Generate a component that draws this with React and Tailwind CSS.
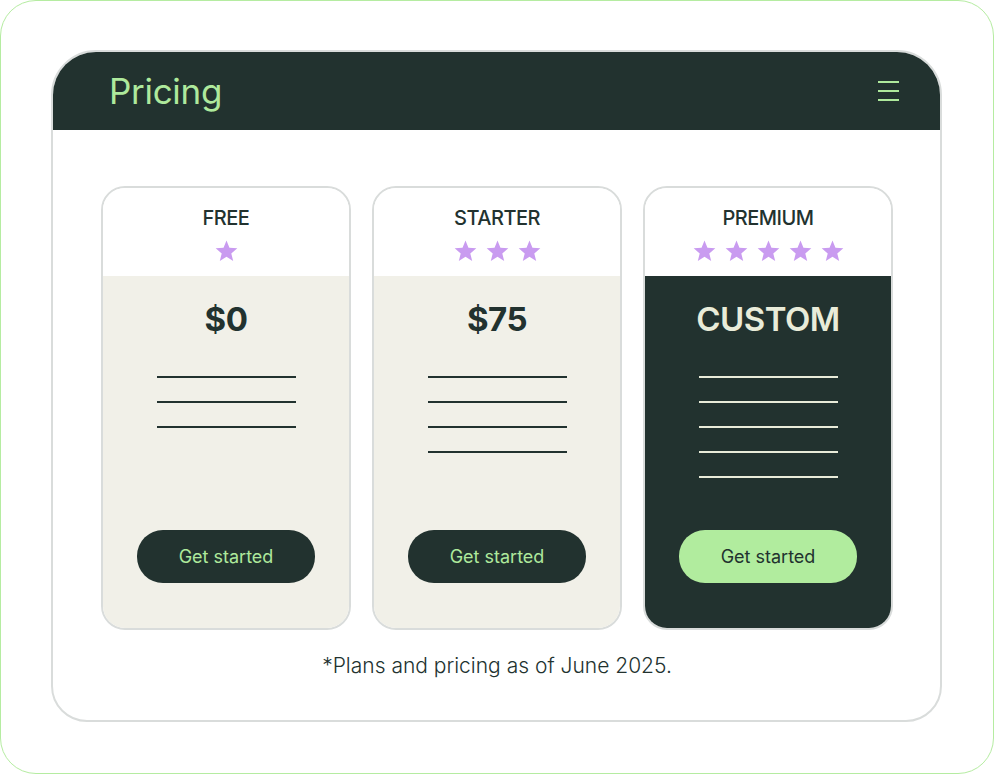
import { Fragment } from 'react'

const plans = [
  { name: 'FREE', stars: 1, price: '$0', lines: 3, dark: false },
  { name: 'STARTER', stars: 3, price: '$75', lines: 4, dark: false },
  { name: 'PREMIUM', stars: 5, price: 'CUSTOM', lines: 5, dark: true },
]

function Star() {
  return (
    <svg width="23" height="22" viewBox="0 0 24 23">
      <path d="M12 0.5l3.1 7.6 8.2 0.6-6.3 5.3 2 8-7-4.4-7 4.4 2-8L0.7 8.7l8.2-0.6z" fill="#c99bf0" />
    </svg>
  )
}

function PlanCard({ plan }) {
  return (
    <div className="w-[250px] h-[444px] rounded-[24px] border-2 border-[#d9dcdb] overflow-hidden flex flex-col">
      <div className="h-[88px] bg-white flex flex-col items-center pt-[18px]">
        <div className="text-[20px] leading-[24px] font-medium tracking-[-0.5px] text-[#22322f]">{plan.name}</div>
        <div className="flex gap-[9px] mt-[10px]">
          {Array.from({ length: plan.stars }).map((_, i) => (
            <Star key={i} />
          ))}
        </div>
      </div>
      <div className={`flex-1 flex flex-col items-center pt-[23px] pb-[45px] ${plan.dark ? 'bg-[#22322f]' : 'bg-[#f1f0e8]'}`}>
        <div className={`text-[33px] leading-[40px] font-bold tracking-[-0.5px] ${plan.dark ? 'text-[#e9ecd9] font-semibold' : 'text-[#22322f]'}`}>
          {plan.price}
        </div>
        <div className="flex flex-col gap-[23px] mt-[37px]">
          {Array.from({ length: plan.lines }).map((_, i) => (
            <div key={i} className={`w-[139px] h-[2px] ${plan.dark ? 'bg-[#e9ecd9]' : 'bg-[#22322f]'}`} />
          ))}
        </div>
        <button
          className={`mt-auto w-[178px] h-[53px] rounded-[26px] text-[18px] ${
            plan.dark ? 'bg-[#b1ec9e] text-[#22322f]' : 'bg-[#22322f] text-[#aee99c]'
          }`}
        >
          Get started
        </button>
      </div>
    </div>
  )
}

export default function App() {
  return (
    <div className="w-[994px] h-[774px] bg-white" style={{ fontFamily: 'Inter, "Open Sans", sans-serif' }}>
      <div className="w-[994px] h-[774px] border border-[#b5eca1] rounded-[36px] pt-[49px] pl-[50px]">
        <div className="w-[891px] h-[672px] border-2 border-[#d9dcdb] rounded-t-[45px] rounded-b-[36px] overflow-hidden flex flex-col">
          <div className="h-[78px] bg-[#22322f] flex items-center justify-between pl-[56px] pr-[41px]">
            <h1 className="text-[35px] leading-[40px] text-[#aee99c] tracking-[-0.3px]">Pricing</h1>
            <div className="flex flex-col gap-[7px]">
              <div className="w-[21px] h-[2px] bg-[#aee99c]" />
              <div className="w-[21px] h-[2px] bg-[#aee99c]" />
              <div className="w-[21px] h-[2px] bg-[#aee99c]" />
            </div>
          </div>
          <div className="flex-1 flex flex-col pt-[56px] pl-[48px]">
            <div className="flex gap-[21px]">
              {plans.map((p) => (
                <Fragment key={p.name}>
                  <PlanCard plan={p} />
                </Fragment>
              ))}
            </div>
            <p className="w-[792px] text-center text-[21px] leading-[28px] font-light text-[#22322f] mt-[22px]">
              *Plans and pricing as of June 2025.
            </p>
          </div>
        </div>
      </div>
    </div>
  )
}
